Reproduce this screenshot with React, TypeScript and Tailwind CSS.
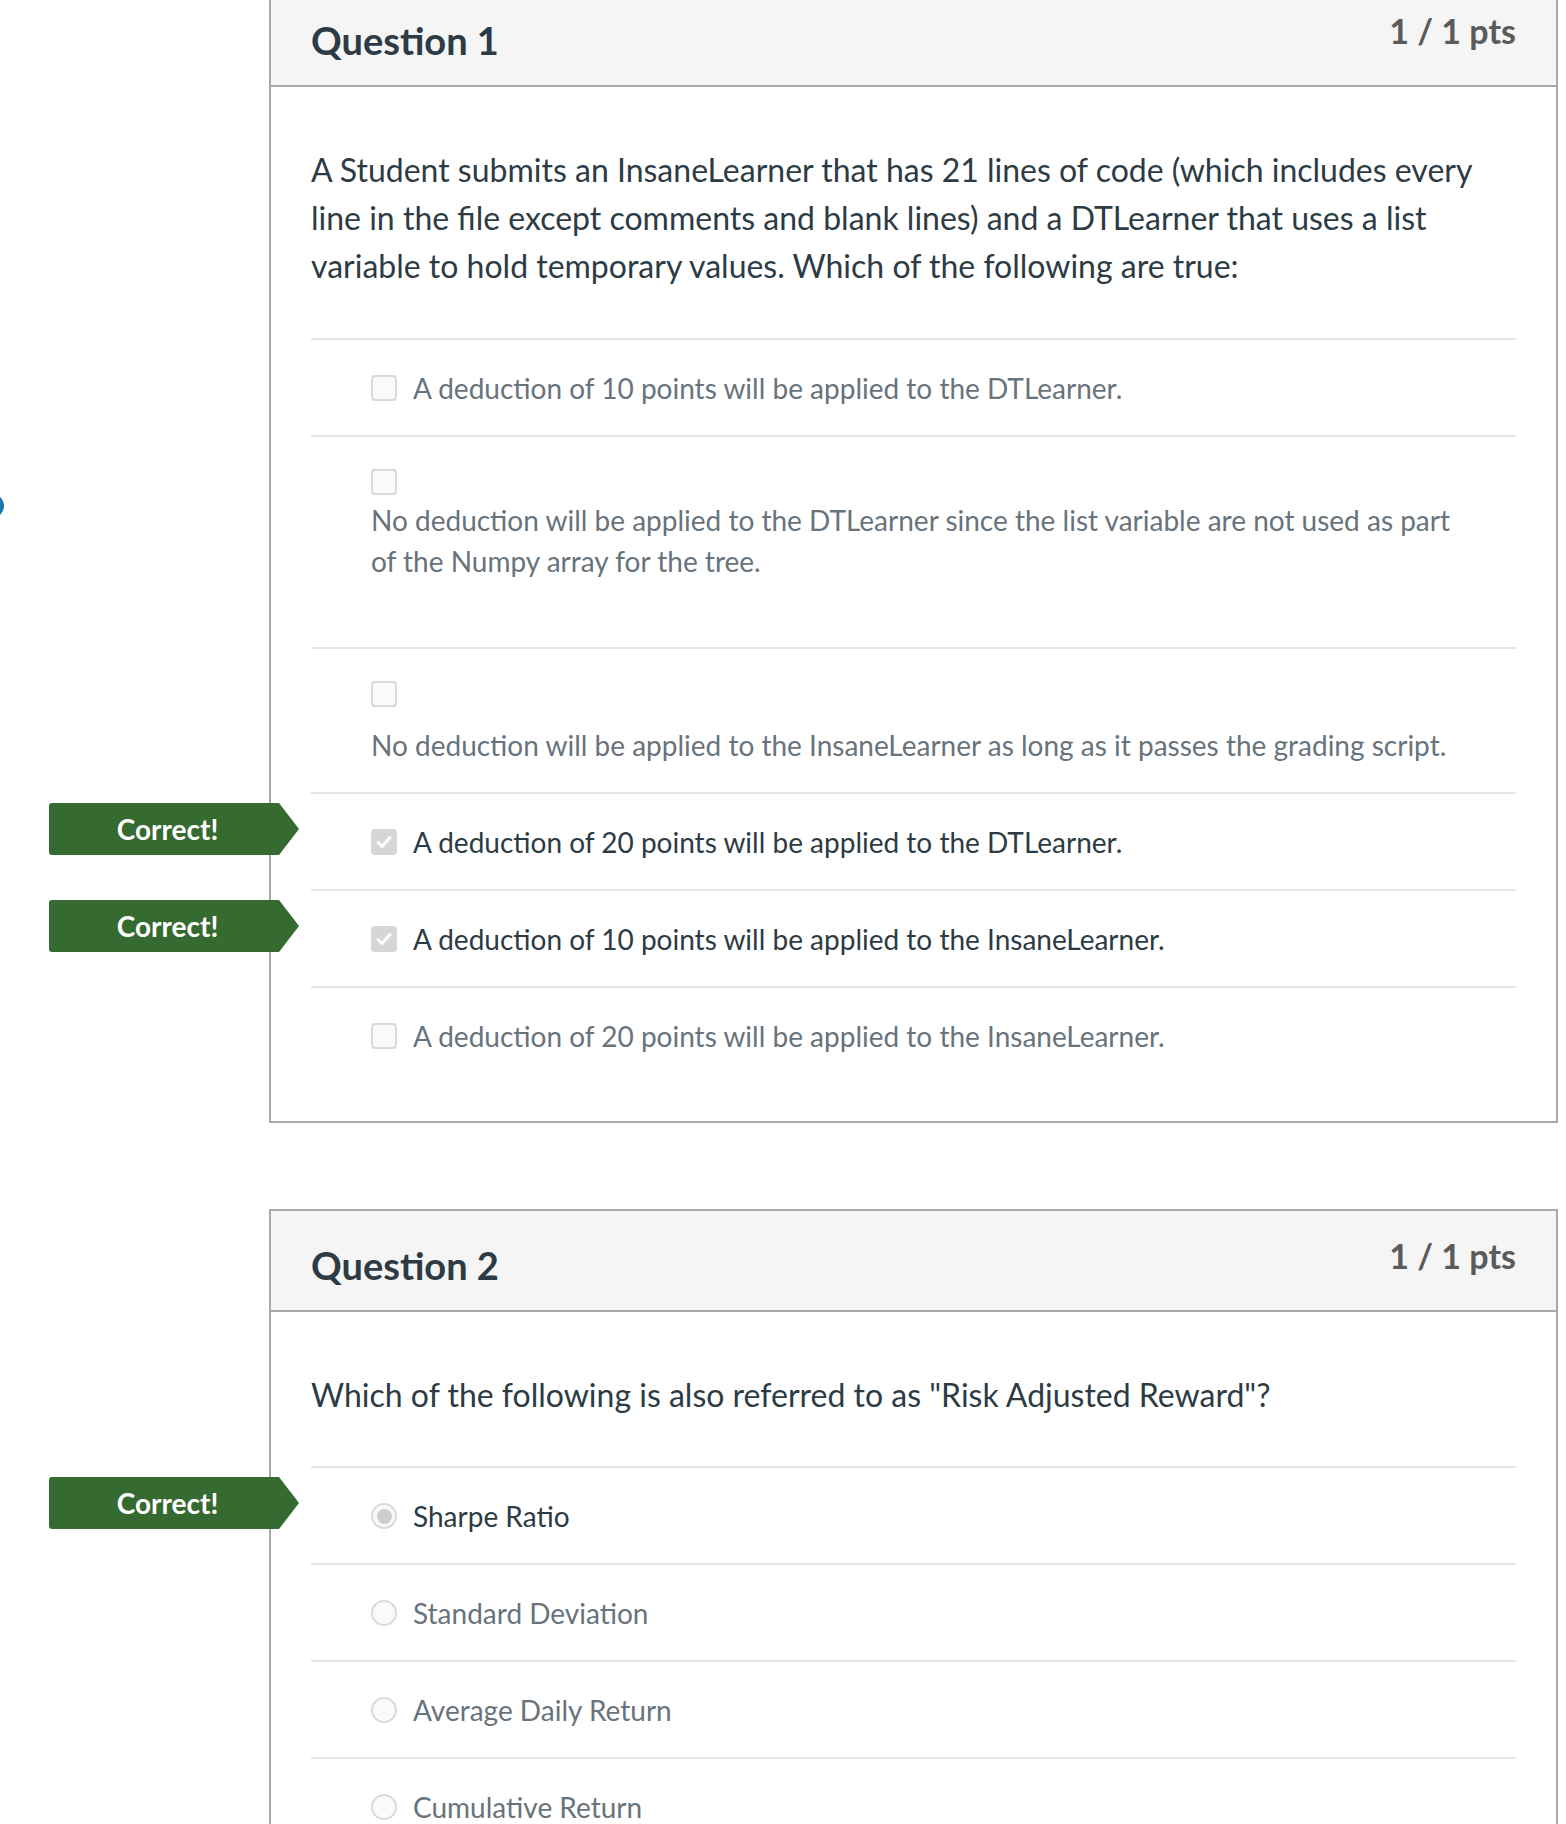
import React from 'react'

type Answer = {
    text: string
    kind: 'check' | 'radio'
    selected?: boolean
    correct?: boolean
    layout?: 'inline' | 'stacked' | 'stackedGap'
}

const q1: Answer[] = [
    { kind: 'check', text: 'A deduction of 10 points will be applied to the DTLearner.' },
    {
        kind: 'check',
        layout: 'stacked',
        text: 'No deduction will be applied to the DTLearner since the list variable are not used as part of the Numpy array for the tree.',
    },
    {
        kind: 'check',
        layout: 'stackedGap',
        text: 'No deduction will be applied to the InsaneLearner as long as it passes the grading script.',
    },
    { kind: 'check', selected: true, correct: true, text: 'A deduction of 20 points will be applied to the DTLearner.' },
    { kind: 'check', selected: true, correct: true, text: 'A deduction of 10 points will be applied to the InsaneLearner.' },
    { kind: 'check', text: 'A deduction of 20 points will be applied to the InsaneLearner.' },
]

const q2: Answer[] = [
    { kind: 'radio', selected: true, correct: true, text: 'Sharpe Ratio' },
    { kind: 'radio', text: 'Standard Deviation' },
    { kind: 'radio', text: 'Average Daily Return' },
    { kind: 'radio', text: 'Cumulative Return' },
]

function Marker({ kind, selected }: { kind: Answer['kind']; selected?: boolean }) {
    if (kind === 'radio') {
        return (
            <span className="w-[26px] h-[26px] shrink-0 rounded-full border-2 border-[#dadada] bg-[#fafafa] flex items-center justify-center">
                {selected && <span className="w-[15px] h-[15px] rounded-full bg-[#cdcdcd]" />}
            </span>
        )
    }
    if (selected) {
        return (
            <span className="w-[26px] h-[26px] shrink-0 rounded-[4px] bg-[#d6d6d6] flex items-center justify-center">
                <svg width="18" height="18" viewBox="0 0 18 18">
                    <path d="M3 9.5l4 4 8-9" fill="none" stroke="#ffffff" strokeWidth="3" strokeLinecap="round" strokeLinejoin="round" />
                </svg>
            </span>
        )
    }
    return <span className="w-[26px] h-[26px] shrink-0 rounded-[4px] border-2 border-[#d9d9d9] bg-[#fafafa]" />
}

function CorrectBadge() {
    return (
        <div className="absolute left-[-262px] top-[9px] flex">
            <div className="w-[230px] h-[52px] rounded-l-[3px] bg-[#356a30] flex items-center justify-center text-white text-[28px] font-bold pl-[7px]">
                Correct!
            </div>
            <div className="w-0 h-0 border-y-[26px] border-y-transparent border-l-[20px] border-l-[#356a30]" />
        </div>
    )
}

function AnswerRow({ a }: { a: Answer }) {
    const color = a.selected ? 'text-[#2d3b45]' : 'text-[#68737c]'
    if (a.layout === 'stacked' || a.layout === 'stackedGap') {
        return (
            <div className={`relative border-t-2 border-[#e6e6e6] pl-[60px] pr-[59px] pt-[27px] ${a.layout === 'stacked' ? 'pb-[65px]' : 'pb-[26px]'}`}>
                <div className="h-[36px] flex items-center">
                    <Marker kind={a.kind} selected={a.selected} />
                </div>
                <p className={`text-[28px] leading-[41px] ${color} ${a.layout === 'stackedGap' ? 'mt-[13px]' : ''}`}>{a.text}</p>
            </div>
        )
    }
    return (
        <div className="relative border-t-2 border-[#e6e6e6] pl-[60px] pr-[59px] pt-[27px] pb-[26px]">
            {a.correct && <CorrectBadge />}
            <div className="flex items-center gap-[16px] h-[42px]">
                <Marker kind={a.kind} selected={a.selected} />
                <span className={`text-[28px] leading-[42px] ${color}`}>{a.text}</span>
            </div>
        </div>
    )
}

function QuestionBox({
    title,
    text,
    answers,
    bodyTop,
    textGap,
}: {
    title: string
    text: string
    answers: Answer[]
    bodyTop: string
    textGap: string
}) {
    return (
        <div className="border-2 border-[#a9a9a9] bg-white">
            <div className="h-[101px] bg-[#f5f5f5] border-b-2 border-[#a9a9a9] px-[40px] flex justify-between items-start">
                <h2 className="mt-[31px] text-[38px] leading-[46px] font-bold text-[#2d3b45]">{title}</h2>
                <div className="mt-[25px] text-[34px] leading-[40px] font-bold text-[#5b5b5b]">1 / 1 pts</div>
            </div>
            <div className={`px-[40px] ${bodyTop} pb-[38px]`}>
                <p className={`text-[32px] leading-[48px] text-[#2d3b45] ${textGap}`}>{text}</p>
                <div>
                    {answers.map((a, i) => (
                        <AnswerRow key={i} a={a} />
                    ))}
                </div>
            </div>
        </div>
    )
}

export default function App() {
    return (
        <div className="relative min-h-screen bg-white overflow-hidden font-['Lato',sans-serif]">
            <div className="absolute left-[-20px] top-[494px] w-[24px] h-[24px] rounded-full bg-[#1f78ad]" />
            <div className="-mt-[16px] pl-[269px] pr-[8px] pb-[40px]">
                <QuestionBox
                    title="Question 1"
                    text="A Student submits an InsaneLearner that has 21 lines of code (which includes every line in the file except comments and blank lines) and a DTLearner that uses a list variable to hold temporary values. Which of the following are true:"
                    answers={q1}
                    bodyTop="pt-[59px]"
                    textGap="mb-[48px]"
                />
                <div className="h-[86px]" />
                <QuestionBox
                    title="Question 2"
                    text={'Which of the following is also referred to as "Risk Adjusted Reward"?'}
                    answers={q2}
                    bodyTop="pt-[59px]"
                    textGap="mb-[47px]"
                />
            </div>
        </div>
    )
}
